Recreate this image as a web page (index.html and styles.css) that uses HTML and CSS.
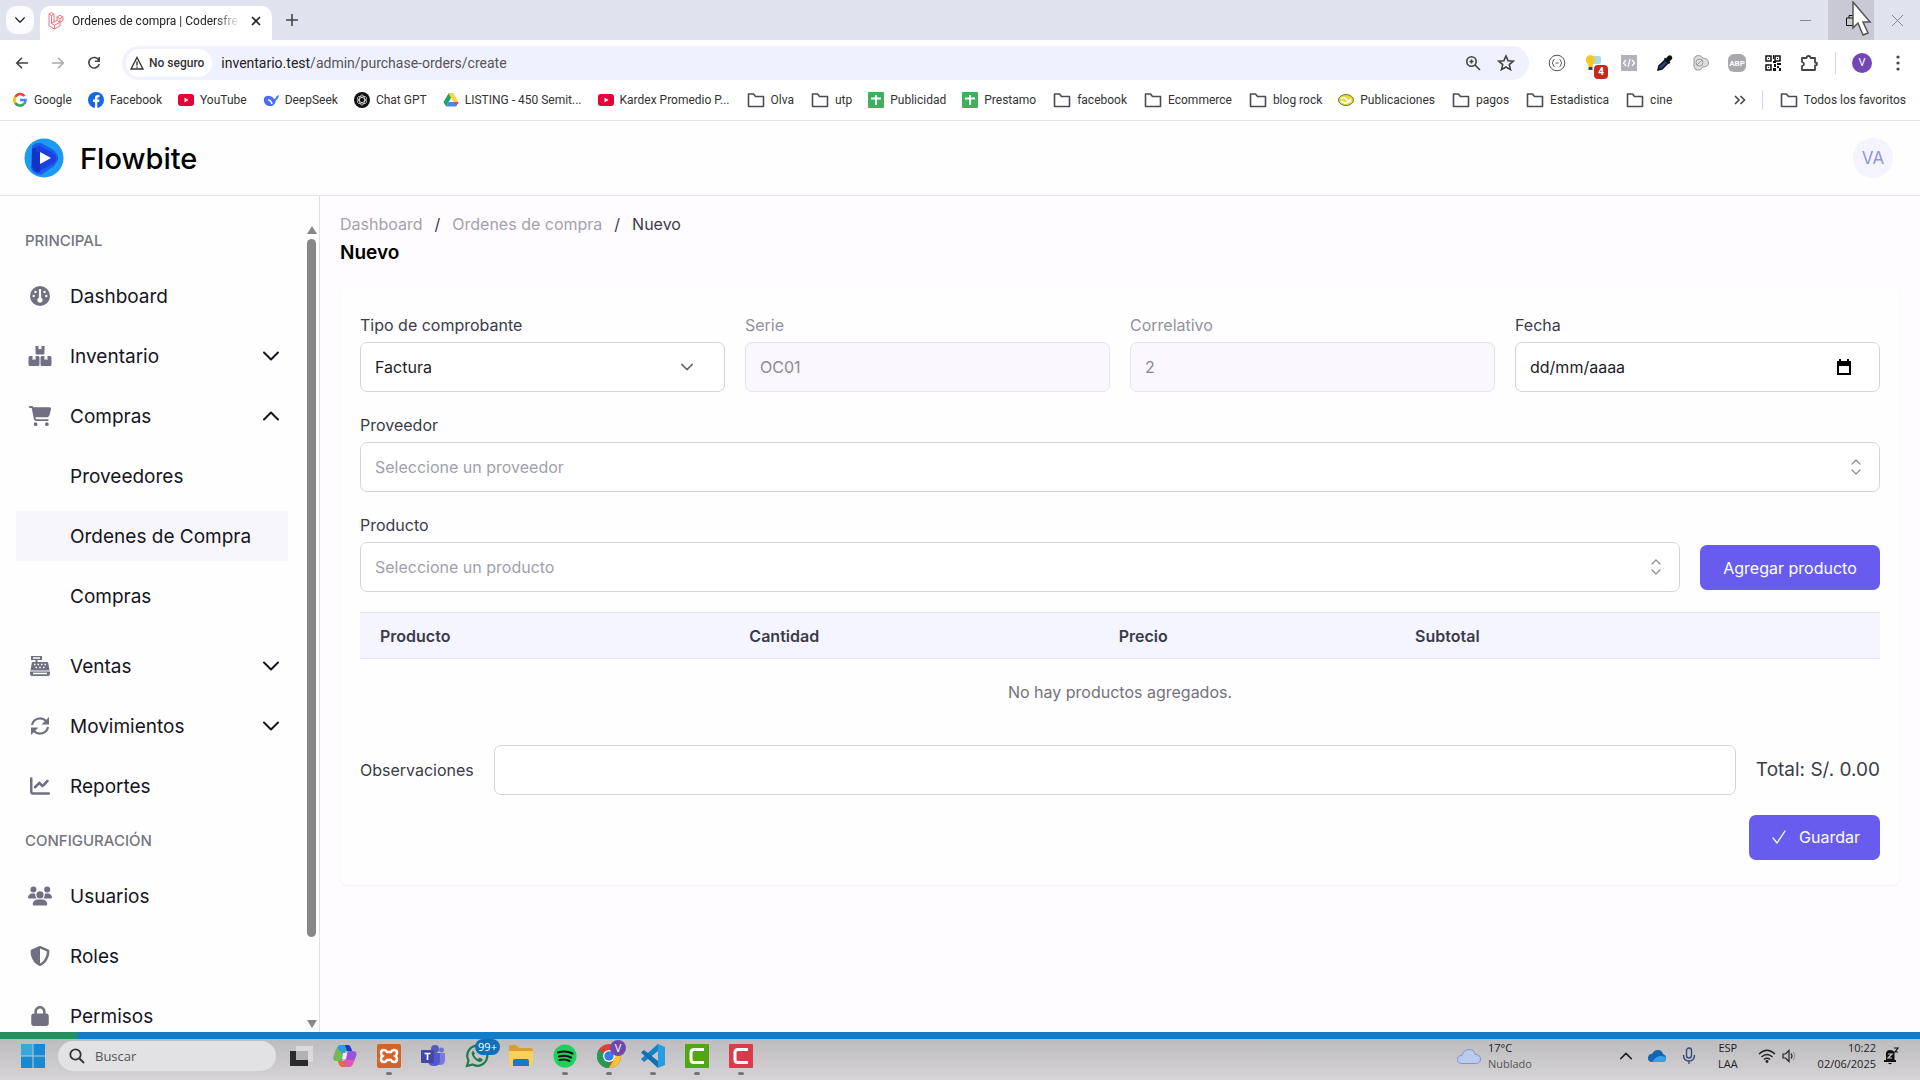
FILE: index.html
```html
<!DOCTYPE html>
<html lang="es">
<head>
    <meta charset="UTF-8">
    <meta name="viewport" content="width=device-width, initial-scale=1.0">
    <title>Ordenes de compra | Codersfree</title>
    <link rel="stylesheet" href="styles.css">
</head>
<body>
    <!-- iconos compartidos -->
    <svg class="hidden">
        <symbol id="folder" viewBox="0 0 20 20"><path d="M2.500 4h5l2 2.500h8V16.500h-15z" fill="none" stroke="#4b4b55" stroke-width="1.600" stroke-linejoin="round"/></symbol>
        <symbol id="youtube" viewBox="0 0 16 16"><rect y="2" width="16" height="12" rx="3" fill="#e60038"/><path d="M6.500 5.500v5l4-2.500z" fill="#fff"/></symbol>
        <symbol id="sheet" viewBox="0 0 16 16"><rect width="16" height="16" rx="1" fill="#3fb15c"/><path d="M8 3v10M3 6.500h10" stroke="#fff" stroke-width="2"/></symbol>
        <symbol id="down" viewBox="0 0 16 16"><path d="M1 4.500l7 7 7-7" fill="none" stroke="currentColor" stroke-width="2" stroke-linecap="round" stroke-linejoin="round"/></symbol>
        <symbol id="up" viewBox="0 0 16 16"><path d="M1 11.500l7-7 7 7" fill="none" stroke="currentColor" stroke-width="2" stroke-linecap="round" stroke-linejoin="round"/></symbol>
        <symbol id="updown" viewBox="0 0 20 20"><path d="M6 7l4-4 4 4M6 13l4 4 4-4" fill="none" stroke="currentColor" stroke-width="1.300" stroke-linecap="round" stroke-linejoin="round"/></symbol>
    </svg>

    <!-- navegador -->
    <div class="browser">
        <div class="tabs">
            <button class="tab-search" aria-label="Buscar pestañas"><svg width="10" height="10"><use href="#down"/></svg></button>
            <div class="tab">
                <svg width="16" height="18" viewBox="0 0 16 18" fill="none" stroke="#f2727c" stroke-width="1" stroke-linejoin="round"><path d="M1 2l2.500-1.500L6 2v8l3-1.700V5l3-1.700L15 5v3.500l-3 1.700v3.600L6.500 17 1 13.800zM1 2l2.500 1.500L6 2M3.500 3.500v8l3 1.800 5.500-3.100M9 5l3 1.700L15 5M12 6.700v3.500M9 8.300l3 1.900M6.500 13.300V17M3.500 11.500L6 10"/></svg>
                <span class="tab-title">Ordenes de compra | Codersfre</span>
                <button class="tab-close" aria-label="Cerrar"><svg width="10" height="10" viewBox="0 0 10 10"><path d="M1 1l8 8M9 1L1 9" stroke="#222" stroke-width="1.700"/></svg></button>
            </div>
            <button class="tab-new" aria-label="Nueva pestaña"><svg width="12" height="12" viewBox="0 0 12 12"><path d="M6 0v12M0 6h12" stroke="#444" stroke-width="1.600"/></svg></button>
            <div class="window-buttons">
                <button aria-label="Minimizar"><svg width="11" height="11" viewBox="0 0 11 11"><path d="M0 5.500h11" stroke="#888"/></svg></button>
                <button class="hover" aria-label="Restaurar"><svg width="11" height="11" viewBox="0 0 11 11" fill="none" stroke="#111"><path d="M.5 3h7v7.500h-7zM3 3V.5h7.500V8H8"/></svg></button>
                <button aria-label="Cerrar ventana"><svg width="11" height="11" viewBox="0 0 11 11"><path d="M0 0l11 11M11 0L0 11" stroke="#888"/></svg></button>
            </div>
            <svg class="cursor" width="20" height="36" viewBox="0 0 20 36"><path d="M1 1v26l5-5 5 12 5-2-5-11h7z" fill="#fff" stroke="#555" stroke-width="1.500"/></svg>
        </div>
        <div class="toolbar">
            <button aria-label="Atrás"><svg width="14" height="14" viewBox="0 0 16 16" fill="none" stroke="#444" stroke-width="1.800"><path d="M15 8H2M8 2L2 8l6 6"/></svg></button>
            <button aria-label="Adelante"><svg width="14" height="14" viewBox="0 0 16 16" fill="none" stroke="#aaa" stroke-width="1.800"><path d="M1 8h13M8 2l6 6-6 6"/></svg></button>
            <button aria-label="Recargar"><svg width="14" height="14" viewBox="0 0 16 16" fill="none" stroke="#444" stroke-width="1.800"><path d="M13.500 5A6 6 0 1 0 14 9M14 1v5H9"/></svg></button>
            <div class="omnibox">
                <span class="chip">
                    <svg width="14" height="14" viewBox="0 0 14 14" fill="none" stroke="#333" stroke-width="1.400"><path d="M7 1.500L13 13H1zM7 5.500v4M7 10.500v1.200"/></svg>
                    No seguro
                </span>
                <span class="url">inventario.test<span>/admin/purchase-orders/create</span></span>
                <svg width="16" height="16" viewBox="0 0 16 16" fill="none" stroke="#444" stroke-width="1.600"><circle cx="6.500" cy="6.500" r="4.700"/><path d="M10 10l5 5M6.500 4.500v4M4.500 6.500h4"/></svg>
                <svg width="18" height="18" viewBox="0 0 18 18" fill="none" stroke="#444" stroke-width="1.600"><path d="M9 2l2.100 4.700 5.100.5-3.900 3.400 1.200 5L9 13l-4.500 2.600 1.200-5L1.800 7.200l5.100-.5z"/></svg>
            </div>
            <div class="extensions">
                <span><svg width="18" height="18" viewBox="0 0 18 18" fill="none" stroke="#555"><circle cx="9" cy="9" r="7.800"/><path d="M6.500 5.500q-1.300 0-1.300 1.500T4 9q1.200.5 1.200 2t1.300 1.500M11.500 5.500q1.300 0 1.300 1.500T14 9q-1.200.5-1.200 2t-1.300 1.500M7.500 9h3"/></svg></span>
                <span class="bulb">
                    <svg width="20" height="20" viewBox="0 0 20 20"><rect x="9" y="3" width="9" height="8" rx="2" fill="#a9dcea"/><path d="M7 2a5 5 0 0 1 3 9l-.5 3h-4L5 11a5 5 0 0 1 2-9z" fill="#f6c928"/><path d="M5.500 14h4v3h-4z" fill="#444"/></svg>
                    <b>4</b>
                </span>
                <span><svg width="16" height="16" viewBox="0 0 16 16"><path fill="#b3b1ba" d="M0 0h16v16H0z"/><path d="M5 5L2.500 8 5 11M11 5l2.500 3L11 11M9 4l-2 8" fill="none" stroke="#fff" stroke-width="1.200"/></svg></span>
                <span><svg width="18" height="18" viewBox="0 0 18 18"><path d="M2 16l1-4 6-6 3 3-6 6z" fill="#2c3d8c" stroke="#111" stroke-width="1.500"/><path d="M8 5l5 5 1.500-1.500-1-1L16 5q1-1.500-.5-3T12 2l-2 2.500-1-1z" fill="#111"/></svg></span>
                <span><svg width="18" height="18" viewBox="0 0 18 18" fill="#ddd" stroke="#999"><path d="M4 2q4-2 7 2 6 1 5.500 5T11 13q-3 4-7 3-3-3-2-7-1-5 2-7z"/><circle cx="7.500" cy="8.500" r="3.500"/><path d="M5 11l5-5" fill="none"/></svg></span>
                <span class="abp">ABP</span>
                <span><svg width="16" height="16" viewBox="0 0 16 16"><path d="M1 1h5v5H1zM10 1h5v5h-5zM1 10h5v5H1z" fill="none" stroke="#111" stroke-width="1.500"/><path d="M3 3h1v1H3zM12 3h1v1h-1zM3 12h1v1H3zM8 0h1v4H8zM8 6h3v2H8zM12 8h4v2h-4zM9 9h2v3H9zM12 11h2v2h-2zM14 13h2v3h-2zM8 13h3v3H8z" fill="#111"/></svg></span>
                <span><svg width="18" height="18" viewBox="0 0 18 18" fill="none" stroke="#444" stroke-width="1.800"><path d="M2 4h4.500q0-2 2-2t2 2H15v4.500q2 0 2 1.500t-2 1.500V16H2v-4q2-.5 2-2t-2-2z" stroke-linejoin="round"/></svg></span>
            </div>
            <span class="profile">V</span>
            <button aria-label="Menú"><svg width="4" height="16" viewBox="0 0 4 16" fill="#444"><circle cx="2" cy="2" r="1.600"/><circle cx="2" cy="8" r="1.600"/><circle cx="2" cy="14" r="1.600"/></svg></button>
        </div>
        <div class="bookmarks">
            <a href="#"><svg viewBox="0 0 16 16" fill="none" stroke-width="2.600"><path d="M12.500 4A5.500 5.500 0 0 0 3.300 5" stroke="#ea4335"/><path d="M3.300 5a5.500 5.500 0 0 0 0 6" stroke="#fbbc05"/><path d="M3.300 11a5.500 5.500 0 0 0 8.500 1" stroke="#34a853"/><path d="M11.800 12q1.700-1.500 1.700-4H8" stroke="#4285f4"/></svg>Google</a>
            <a href="#"><svg viewBox="0 0 16 16"><circle cx="8" cy="8" r="8" fill="#1866e8"/><path d="M7 16V10H5V7.500h2V6q0-3 3-3h1.500v2.300h-1Q9.300 5.300 9.300 6.500v1h2.200L11 10H9.300v6z" fill="#fff"/></svg>Facebook</a>
            <a href="#"><svg><use href="#youtube"/></svg>YouTube</a>
            <a href="#"><svg viewBox="0 0 16 16"><path d="M1 6q2-3 6-2 3 .5 4 3 2 0 2.500-3 1 0 2.500-1-.5 4-3 5-.5 4-4 6H5Q0 12 1 6z" fill="#4d6bfe"/><path d="M5 8q3 0 4 4" stroke="#fff" stroke-width="1.500" fill="none"/></svg>DeepSeek</a>
            <a href="#"><svg viewBox="0 0 16 16"><circle cx="8" cy="8" r="8" fill="#111"/><g fill="none" stroke="#ddd" stroke-width=".8"><ellipse cx="8" cy="8" rx="2.500" ry="5"/><ellipse cx="8" cy="8" rx="2.500" ry="5" transform="rotate(60 8 8)"/><ellipse cx="8" cy="8" rx="2.500" ry="5" transform="rotate(120 8 8)"/></g></svg>Chat GPT</a>
            <a href="#"><svg viewBox="0 0 16 16"><path d="M5.500 1.500h5L8 6 3 14.500.5 10z" fill="#1fa463"/><path d="M10.500 1.500L15.500 10h-5L5.500 1.500z" fill="#ffd04b"/><path d="M5.500 10h10L13 14.500H3z" fill="#4688f1"/><path d="M12 10h3.500L13 14.500z" fill="#ea4335"/></svg>LISTING - 450 Semit...</a>
            <a href="#"><svg><use href="#youtube"/></svg>Kardex Promedio P...</a>
            <a href="#" class="folder"><svg><use href="#folder"/></svg>Olva</a>
            <a href="#" class="folder"><svg><use href="#folder"/></svg>utp</a>
            <a href="#"><svg><use href="#sheet"/></svg>Publicidad</a>
            <a href="#"><svg><use href="#sheet"/></svg>Prestamo</a>
            <a href="#" class="folder"><svg><use href="#folder"/></svg>facebook</a>
            <a href="#" class="folder"><svg><use href="#folder"/></svg>Ecommerce</a>
            <a href="#" class="folder"><svg><use href="#folder"/></svg>blog rock</a>
            <a href="#"><svg viewBox="0 0 16 16"><ellipse cx="8" cy="8" rx="7.500" ry="5.500" fill="#e2dc3c" stroke="#77752a"/><path d="M3 7q3-3 5 0t5 0M3 9l4 2.500L13 9" fill="none" stroke="#fff" stroke-width="1.500"/></svg>Publicaciones</a>
            <a href="#" class="folder"><svg><use href="#folder"/></svg>pagos</a>
            <a href="#" class="folder"><svg><use href="#folder"/></svg>Estadistica</a>
            <a href="#" class="folder"><svg><use href="#folder"/></svg>cine</a>
            <button class="more" aria-label="Más favoritos"><svg width="12" height="10" viewBox="0 0 12 10" fill="none" stroke="#444" stroke-width="1.600"><path d="M1 1l4 4-4 4M6.500 1l4 4-4 4"/></svg></button>
            <a href="#" class="folder all"><svg><use href="#folder"/></svg>Todos los favoritos</a>
        </div>
    </div>

    <header class="header">
        <svg width="40" height="40" viewBox="0 0 40 40"><circle cx="20" cy="20" r="19.500" fill="#1d9bf0"/><path d="M8 8q4-4 9-3l11 6q7 5 6 11l-4 6-13 9q-8-1-10-7z" fill="#1b5cf0"/><path d="M8 11q5-3 9 0v20q-1 5-5 3-4-2-4-7z" fill="#1234c8"/><path d="M12 9q3-2 6 0l12 7q5 4 0 9l-11 6q-4 1-3-4l8-7-12-7z" fill="#1c3fe0"/><path d="M16 14l11 6-11 6z" fill="#fff"/></svg>
        <span class="brand">Flowbite</span>
        <button class="avatar">VA</button>
    </header>

    <div class="layout">
        <aside class="sidebar">
            <nav class="menu">
                <h3>PRINCIPAL</h3>
                <a href="#"><svg viewBox="0 0 20 20"><circle cx="10" cy="10" r="10"/><g fill="#fff"><rect x="8.900" y="3" width="2.200" height="10" rx="1"/><circle cx="10" cy="14" r="2.600"/><circle cx="5.500" cy="6" r="1.200"/><circle cx="14.500" cy="6" r="1.200"/><circle cx="3.700" cy="10" r="1.200"/><circle cx="16.300" cy="10" r="1.200"/></g></svg>Dashboard</a>
                <a href="#"><svg viewBox="0 0 23 20"><path d="M7 0h3v3.500l1.500-.8 1.500.8V0h3v7q0 1.500-1.500 1.500h-6Q7 8.500 7 7zM0 11.500Q0 10 1.500 10H4v4l1.500-.8L7 14v-4h2.500q1.500 0 1.500 1.500v7Q11 20 9.500 20h-8Q0 20 0 18.500zM12 11.500q0-1.500 1.500-1.500H16v4l1.500-.8L19 14v-4h2.500q1.500 0 1.500 1.500v7q0 1.500-1.500 1.500h-8Q12 20 12 18.500z"/></svg>Inventario<svg class="arrow"><use href="#down"/></svg></a>
                <a href="#"><svg viewBox="0 0 576 512"><path d="M0 24C0 10.700 10.700 0 24 0H69.500c22 0 41.500 12.800 50.600 32h411c26.300 0 45.500 25 38.600 50.400l-41 152.300c-8.500 31.400-37 53.300-69.500 53.300H170.700l5.400 28.500c2.200 11.300 12.100 19.500 23.600 19.500H488c13.300 0 24 10.700 24 24s-10.700 24-24 24H199.700c-34.600 0-64.300-24.600-70.700-58.500L77.400 54.500c-.7-3.800-4-6.500-7.900-6.500H24C10.700 48 0 37.300 0 24zM128 464a48 48 0 1 1 96 0 48 48 0 1 1 -96 0zm336-48a48 48 0 1 1 0 96 48 48 0 1 1 0-96z"/></svg>Compras<svg class="arrow"><use href="#up"/></svg></a>
                <div class="submenu">
                    <a href="#">Proveedores</a>
                    <a href="#" class="active">Ordenes de Compra</a>
                    <a href="#">Compras</a>
                </div>
                <a href="#"><svg viewBox="0 0 20 20"><path d="M1 0h11v4H7.500v2H17q1 0 1.200 1l1.300 7.500H.5L1.800 7Q2 6 3 6h2.500V4H1zM0 15.500h20V18q0 2-2 2H2q-2 0-2-2z"/><path d="M3 2h7M4 8.500h1.500M7.500 8.500H9M11 8.500h1.500M14.500 8.500H16M5.500 11.500H7M9.200 11.500h1.600M13 11.500h1.500M3 17.500h14" stroke="#fff" stroke-width="1.300"/></svg>Ventas<svg class="arrow"><use href="#down"/></svg></a>
                <a href="#"><svg viewBox="0 0 20 20"><path d="M2 9a8.200 8.200 0 0 1 14-4l2 2M18 11a8.200 8.200 0 0 1-14 4l-2-2" fill="none" stroke="#6f7082" stroke-width="2.200"/><path d="M19 1v7.500h-7.500zM1 19v-7.500h7.500z"/></svg>Movimientos<svg class="arrow"><use href="#down"/></svg></a>
                <a href="#"><svg viewBox="0 0 512 512"><path d="M64 64c0-17.700-14.300-32-32-32S0 46.300 0 64V400c0 44.200 35.800 80 80 80H480c17.700 0 32-14.300 32-32s-14.300-32-32-32H80c-8.800 0-16-7.200-16-16V64zm406.600 86.600c12.500-12.500 12.500-32.800 0-45.300s-32.800-12.500-45.300 0L320 210.700l-57.400-57.400c-12.500-12.500-32.800-12.500-45.300 0l-112 112c-12.500 12.500-12.500 32.800 0 45.300s32.800 12.500 45.300 0L240 221.300l57.400 57.400c12.500 12.500 32.800 12.500 45.300 0l128-128z"/></svg>Reportes</a>
                <h3>CONFIGURACIÓN</h3>
                <a href="#"><svg viewBox="0 0 640 512"><path d="M144 0a80 80 0 1 1 0 160A80 80 0 1 1 144 0zM512 0a80 80 0 1 1 0 160A80 80 0 1 1 512 0zM0 298.700C0 239.800 47.800 192 106.700 192h42.700c15.900 0 31 3.500 44.600 9.700c-1.300 7.200-1.900 14.700-1.900 22.300c0 38.200 16.800 72.500 43.300 96H21.300C9.600 320 0 310.400 0 298.700zM405.300 320c26.600-23.500 43.300-57.800 43.300-96c0-7.600-.7-15-1.900-22.300c13.600-6.300 28.700-9.700 44.600-9.700h42.700C592.200 192 640 239.800 640 298.700c0 11.800-9.600 21.300-21.300 21.300H405.300zM224 224a96 96 0 1 1 192 0 96 96 0 1 1 -192 0zM128 485.300C128 411.700 187.700 352 261.300 352H378.700C452.300 352 512 411.700 512 485.300c0 14.700-11.900 26.700-26.700 26.700H154.700c-14.700 0-26.700-11.900-26.700-26.700z"/></svg>Usuarios</a>
                <a href="#"><svg viewBox="0 0 512 512"><path d="M256 0c4.600 0 9.200 1 13.400 2.900L457.700 82.800c22 9.300 38.400 31 38.300 57.200c-.5 99.200-41.300 280.700-213.600 363.200c-16.700 8-36.100 8-52.800 0C57.300 420.700 16.500 239.200 16 140c-.1-26.200 16.300-47.900 38.300-57.200L242.700 2.900C246.800 1 251.400 0 256 0zm0 66.800V444.800C394 378 431.100 230.100 432 141.400L256 66.800z"/></svg>Roles</a>
                <a href="#"><svg viewBox="0 0 448 512"><path d="M144 144v48H304V144c0-44.200-35.800-80-80-80s-80 35.800-80 80zM80 192V144C80 64.500 144.500 0 224 0s144 64.500 144 144v48h16c35.300 0 64 28.700 64 64V448c0 35.300-28.700 64-64 64H64c-35.300 0-64-28.700-64-64V256c0-35.300 28.700-64 64-64H80z"/></svg>Permisos</a>
            </nav>
            <div class="scrollbar">
                <svg width="10" height="8" viewBox="0 0 10 8"><path d="M5 0l5 8H0z"/></svg>
                <span class="thumb"></span>
                <svg width="10" height="8" viewBox="0 0 10 8"><path d="M5 8l5-8H0z"/></svg>
            </div>
        </aside>

        <main class="content">
            <nav class="breadcrumb"><a href="#">Dashboard</a><span>/</span><a href="#">Ordenes de compra</a><span>/</span><span>Nuevo</span></nav>
            <h1>Nuevo</h1>
            <form class="card">
                <div class="grid">
                    <div class="field">
                        <label for="tipo">Tipo de comprobante</label>
                        <div class="control">
                            <select id="tipo"><option>Factura</option></select>
                            <svg class="caret" width="12" height="12"><use href="#down"/></svg>
                        </div>
                    </div>
                    <div class="field disabled">
                        <label for="serie">Serie</label>
                        <input type="text" id="serie" value="OC01" disabled>
                    </div>
                    <div class="field disabled">
                        <label for="correlativo">Correlativo</label>
                        <input type="text" id="correlativo" value="2" disabled>
                    </div>
                    <div class="field">
                        <label for="fecha">Fecha</label>
                        <div class="control">
                            <input type="text" id="fecha" class="date" placeholder="dd/mm/aaaa">
                            <svg class="calendar" width="16" height="16" viewBox="0 0 16 16"><path d="M1 2h2V0h2v2h6V0h2v2h2v14H1zm2 5v7h10V7z" fill="#000" fill-rule="evenodd"/></svg>
                        </div>
                    </div>
                </div>
                <div class="field">
                    <label for="proveedor">Proveedor</label>
                    <div class="control">
                        <select id="proveedor" class="empty"><option>Seleccione un proveedor</option></select>
                        <svg class="updown" width="20" height="20"><use href="#updown"/></svg>
                    </div>
                </div>
                <div class="row">
                    <div class="field grow">
                        <label for="producto">Producto</label>
                        <div class="control">
                            <select id="producto" class="empty"><option>Seleccione un producto</option></select>
                            <svg class="updown" width="20" height="20"><use href="#updown"/></svg>
                        </div>
                    </div>
                    <button type="button" class="btn add">Agregar producto</button>
                </div>
                <table class="table">
                    <thead>
                        <tr><th>Producto</th><th>Cantidad</th><th>Precio</th><th>Subtotal</th><th></th></tr>
                    </thead>
                    <tbody>
                        <tr><td colspan="5">No hay productos agregados.</td></tr>
                    </tbody>
                </table>
                <div class="summary">
                    <label for="obs">Observaciones</label>
                    <input type="text" id="obs" class="grow">
                    <span class="total">Total: S/. 0.00</span>
                </div>
                <button type="button" class="btn save"><svg width="20" height="20" viewBox="0 0 20 20"><path d="M4 11l4 5 8-12" fill="none" stroke="#fff" stroke-width="1.300" stroke-linecap="round"/></svg>Guardar</button>
            </form>
        </main>
    </div>

    <div class="progress"><span></span></div>

    <!-- barra de tareas -->
    <footer class="taskbar">
        <svg class="start" width="24" height="24" viewBox="0 0 24 24" fill="#168bd4"><path fill="#35a8dc" d="M0 0h11.500v11.500H0z"/><path d="M12.500 0H24v11.500H12.500zM0 12.500h11.500V24H0zM12.500 12.500H24V24H12.500z"/></svg>
        <label class="search">
            <svg width="16" height="16" viewBox="0 0 16 16" fill="none" stroke="#333" stroke-width="1.800"><circle cx="6.500" cy="6.500" r="5.200"/><path d="M10.500 10.500L15 15"/></svg>
            <input type="text" placeholder="Buscar" aria-label="Buscar">
        </label>
        <div class="apps">
            <span><svg viewBox="0 0 24 24"><path fill="#dcdadc" d="M7 2h17v16H7z"/><path fill="#2a2a2c" d="M1 7h18v15H1z"/><path fill="#b3b1b4" d="M7 7h12v9H7z"/></svg></span>
            <span><svg viewBox="0 0 24 24"><path d="M7 1h8q2 0 3 3l1 3h-5q-2 0-3 3l-2 7H4q-5 0-3-6l3-7q1-3 3-3z" fill="#2e9fd8"/><path d="M4 4l-3 7q-1 4 2 6h5l2-7z" fill="#7bb94a"/><path d="M12 1h3q2 0 3 3l1 3h-5z" fill="#2438b5"/><path d="M17 23H9q-2 0-3-3l-1-3h5q2 0 3-3l2-7h5q5 0 3 6l-3 7q-1 3-3 3z" fill="#d95bb0"/><path d="M12 23H9q-2 0-3-3l-1-3h5z" fill="#ee6b35"/><path d="M15 7h5q4 1 3 5l-2 4h-8z" fill="#9157dd"/><path d="M10 9h4l-1 6H9z" fill="#f0e8f2"/></svg></span>
            <span class="open"><svg viewBox="0 0 24 24"><rect width="24" height="24" rx="2" fill="#d4632a"/><path d="M7 6q-3 0-3 3 0 2 1.500 3Q4 13 4 15q0 3 3 3 2 0 3-2h4q1 2 3 2 3 0 3-3 0-2-1.500-3Q20 11 20 9q0-3-3-3-2 0-3 2h-4Q9 6 7 6z" fill="none" stroke="#fff" stroke-width="2.600"/></svg></span>
            <span><svg viewBox="0 0 24 24"><circle cx="14" cy="5" r="4" fill="#5558c8"/><circle cx="20.500" cy="6" r="2.500" fill="#6f72d8"/><path fill="#777be0" d="M17 9h7v7q0 5-5 5h-2z"/><path fill="#5558c8" d="M7 9h12v8q0 5-6 5t-6-5z"/><rect y="6" width="13" height="13" rx="1" fill="#4347a8"/><path d="M3.500 9.500h6M6.500 9.500V16" stroke="#fff" stroke-width="1.700"/></svg></span>
            <span class="whatsapp"><svg viewBox="0 0 24 24"><path d="M2 22l1.500-5.500A10 10 0 1 1 7.500 20.500z" fill="none" stroke="#1f7a4c" stroke-width="2.200"/><path d="M8 6.500q-2 2-1 4.500 2 5 7 7 2.500.5 4-2.500l-3.500-2-1.500 1.500q-2.500-1-4-4l1-1.500z" fill="#1f7a4c"/></svg><b>99+</b></span>
            <span><svg viewBox="0 0 24 24"><path d="M0 3q0-2 2-2h5l3 3h12q2 0 2 2v5H0z" fill="#d99e2b"/><path d="M0 7h24v13q0 2-2 2H2q-2 0-2-2z" fill="#fad05a"/><path d="M4 17q0-2 2-2h12q2 0 2 2v5H4z" fill="#1679c8"/></svg></span>
            <span class="open"><svg viewBox="0 0 24 24"><circle cx="12" cy="12" r="11.500" fill="#1ed05b"/><path d="M5 8.500q8-2.500 14.500 1M6 12.500q7-2 12 1M6.500 16q6-1.500 10 1" fill="none" stroke="#111" stroke-width="2.100" stroke-linecap="round"/></svg></span>
            <span class="open chrome"><svg viewBox="0 0 24 24"><circle cx="12" cy="12" r="12" fill="#dd4136"/><path d="M1.600 6L12 12l1 12A12 12 0 0 1 1.600 6z" fill="#259b55"/><path d="M22.800 7A12 12 0 0 1 12 24l5-9-1-8z" fill="#f6c631"/><circle cx="12" cy="12" r="6" fill="#fff"/><circle cx="12" cy="12" r="4.700" fill="#377be6"/></svg><b>V</b></span>
            <span class="open"><svg viewBox="0 0 24 24"><path d="M17 0l7 3v18l-7 3z" fill="#279ddf"/><path d="M17 0v7L3 18l-3-3z" fill="#1681c5"/><path d="M0 8.500L3 6l14 11v7z" fill="#1170b2"/></svg></span>
            <span class="open"><svg viewBox="0 0 24 24"><rect width="24" height="24" rx="1" fill="#50a615"/><path d="M19 5.500H9q-3 0-3 3v7q0 3 3 3h10" fill="none" stroke="#fff" stroke-width="3"/></svg></span>
            <span class="open"><svg viewBox="0 0 24 24"><rect width="24" height="24" rx="1" fill="#dc3b49"/><path d="M19 5.500H9q-3 0-3 3v7q0 3 3 3h10" fill="none" stroke="#fff" stroke-width="3"/></svg></span>
        </div>
        <div class="weather">
            <svg width="24" height="16" viewBox="0 0 24 16"><path d="M5 15.500q-4.500 0-4.500-4T5 7.500q1.500-6 7-6t6 5q5.500 0 5.500 4.500t-5 4.500z" fill="#b9cbee" stroke="#8296c8"/></svg>
            <p>17°C<br><span>Nublado</span></p>
        </div>
        <div class="tray">
            <svg width="12" height="12"><use href="#up"/></svg>
            <svg width="18" height="12" viewBox="0 0 18 12"><path d="M4 12q-4 0-4-4t4-4q2-4 6-4t5 4q3 1 3 4t-3 4z" fill="#1267b4"/><path d="M4 12q4-6 8-6 6 0 6 3t-3 3z" fill="#30a4e0"/></svg>
            <svg width="14" height="18" viewBox="0 0 14 18" fill="none" stroke="#3b4b80" stroke-width="1.400"><rect x="4.500" y="1" width="5" height="10" rx="2.500"/><path d="M1.500 8q0 6 5.500 6t5.500-6M7 14v3"/></svg>
        </div>
        <p class="lang">ESP<br>LAA</p>
        <svg width="18" height="14" viewBox="0 0 18 14" fill="none" stroke="#222" stroke-width="1.300"><path d="M1 5q8-7.500 16 0M3.500 8q5.500-5 11 0M6 10.500q3-2.500 6 0"/><circle cx="9" cy="12.500" r=".8" fill="#222"/></svg>
        <svg width="16" height="14" viewBox="0 0 16 14" fill="none" stroke="#222" stroke-width="1.200"><path d="M1 5h2.500L7 1.500v11L3.500 9H1zM9 4.500q2 2.500 0 5"/><path d="M11 3q3.500 4 0 8" stroke="#999"/></svg>
        <p class="clock">10:22<br>02/06/2025</p>
        <svg width="16" height="18" viewBox="0 0 16 18"><path d="M2 15h11v-2H11.500V5Q10 3 7 3 3 3 3 7v6H1v2z" fill="#111"/><path d="M5 16h4q-2 2.500-4 0z" fill="#111"/><path d="M5 7h4l-4 4h4" stroke="#ccc" fill="none" stroke-width="1.200"/><path d="M11 1h4l-3 4h3" stroke="#111" fill="none" stroke-width="1.200"/></svg>
    </footer>
</body>
</html>
```

FILE: styles.css
```css
* { box-sizing: border-box; }
body { margin: 0; height: 100vh; display: flex; flex-direction: column; overflow: hidden; font-family: Inter, sans-serif; background: #fefcff; color: #3b3b4b; }
button { background: none; border: none; padding: 0; font-family: inherit; cursor: pointer; display: flex; align-items: center; justify-content: center; }
a { text-decoration: none; color: inherit; }
p { margin: 0; }
svg { flex-shrink: 0; }
.hidden { display: none; }
.grow { flex: 1; }

/* navegador */
.browser { font-family: Roboto, sans-serif; background: white; color: #333; }
.tabs { position: relative; display: flex; height: 40px; background: #e0e2ee; padding-left: 6px; }
.tab-search { width: 28px; height: 28px; margin-top: 6px; border-radius: 10px; background: #fcfbff; color: #222; }
.tab { display: flex; align-items: center; gap: 8px; width: 232px; margin: 6px 0 0 6px; padding: 0 8px 4px; border-radius: 10px 10px 0 0; background: white; }
.tab-title { flex: 1; font-size: 12px; white-space: nowrap; color: #222; mask-image: linear-gradient(90deg, black 85%, transparent); }
.tab-close { width: 16px; height: 16px; }
.tab-new { width: 28px; height: 28px; margin: 6px 0 0 6px; }
.window-buttons { display: flex; margin-left: auto; }
.window-buttons button { width: 46px; height: 40px; }
.window-buttons .hover { background: #c8c9d5; }
.cursor { position: absolute; top: 1px; right: 48px; }
.toolbar { display: flex; align-items: center; height: 40px; padding: 6px 4px 0 4px; }
.toolbar button { width: 36px; height: 34px; }
.omnibox { flex: 1; display: flex; align-items: center; gap: 16px; height: 34px; margin-left: 10px; padding: 0 14px 0 4px; border-radius: 17px; background: #f0f1ff; }
.chip { display: flex; align-items: center; gap: 5px; height: 28px; padding: 0 8px 0 4px; border-radius: 14px; background: white; font-size: 12px; font-weight: 500; margin-right: -7px; }
.url { flex: 1; font-size: 14px; color: #222; }
.url span { color: #555; }
.extensions { display: flex; margin-left: 10px; padding-right: 8px; border-right: 1px solid #d5d5e5; }
.extensions span { display: flex; align-items: center; justify-content: center; width: 36px; height: 22px; }
.bulb { position: relative; }
.bulb b { position: absolute; right: 3px; bottom: -5px; width: 14px; height: 14px; border-radius: 4px; background: #c5281c; color: white; font-size: 10px; line-height: 14px; text-align: center; }
.extensions .abp { width: 18px; height: 18px; margin: 2px 9px; border-radius: 6px; background: #a9a9ad; color: white; font-size: 8px; font-weight: bold; }
.profile { width: 20px; height: 20px; margin: 0 8px 0 16px; border-radius: 50%; background: #7446b5; color: white; font-size: 11px; line-height: 20px; text-align: center; }
.bookmarks { display: flex; align-items: center; gap: 16px; height: 41px; padding: 0 14px 0 12px; border-bottom: 1px solid #e3e3ea; font-size: 12px; white-space: nowrap; }
.bookmarks a { display: flex; align-items: center; gap: 6px; }
.bookmarks a svg { width: 16px; height: 16px; }
.bookmarks .folder { gap: 5px; }
.bookmarks .folder svg { width: 20px; height: 20px; }
.bookmarks .more { margin-left: auto; }
.bookmarks .all { padding-left: 16px; border-left: 1px solid #d5d5e5; }

/* cabecera */
.header { display: flex; align-items: center; gap: 16px; height: 75px; padding: 0 27px 0 24px; border-bottom: 1px solid #e6e5ec; background: #fefefe; }
.brand { font-size: 29px; font-weight: 500; color: #000; }
.avatar { width: 40px; height: 40px; margin-left: auto; border-radius: 50%; background: #f3f4ff; color: #8f94dc; font-size: 17px; }

/* menu lateral */
.layout { flex: 1; display: flex; min-height: 0; }
.sidebar { width: 320px; display: flex; border-right: 1px solid #e0dfe8; background: #fefefe; }
.menu { flex: 1; display: flex; flex-direction: column; gap: 10px; padding: 25px 16px 0; overflow: hidden; }
.menu h3 { flex-shrink: 0; margin: 0; padding-left: 9px; font-size: 15px; font-weight: 500; line-height: 40px; color: #74757f; }
.menu a { flex-shrink: 0; display: flex; align-items: center; gap: 18px; height: 50px; padding: 0 9px 0 12px; font-size: 19px; color: #15151f; }
.menu a svg { width: 24px; height: 20px; fill: #6f7082; }
.menu a .arrow { width: 16px; height: 16px; margin-left: auto; }
.submenu { flex-shrink: 0; display: flex; flex-direction: column; gap: 10px; padding-bottom: 10px; }
.submenu a { padding-left: 54px; }
.menu .active { background: #f6f6fb; }
.scrollbar { display: flex; flex-direction: column; align-items: center; gap: 5px; width: 15px; padding: 30px 0 4px; }
.scrollbar svg { fill: #88878b; }
.thumb { width: 9px; height: 87%; margin-bottom: auto; border-radius: 5px; background: #88878b; }

/* contenido */
.content { flex: 1; padding: 16px 20px; }
.breadcrumb { display: flex; gap: 12px; font-size: 16px; line-height: 25px; }
.breadcrumb a { color: #a3a2ac; }
h1 { margin: 0 0 18px; font-size: 19px; font-weight: 600; line-height: 32px; color: #000; }
.card { display: flex; flex-direction: column; gap: 20px; padding: 25px 20px; border-radius: 8px; background: #fefefe; box-shadow: 0 1px 2px rgba(80,60,120,0.06); }
.grid { display: grid; grid-template-columns: repeat(4, 1fr); gap: 20px; }
.row { display: flex; align-items: flex-end; gap: 20px; }
label { font-size: 16px; }
.field label { display: block; margin-bottom: 3px; line-height: 27px; }
.control { position: relative; }
.card input, .card select { display: block; width: 100%; height: 50px; padding: 0 14px; border: 1px solid #d4d3de; border-radius: 7px; background: white; font-family: inherit; font-size: 16px; color: #1c1c28; appearance: none; }
.card .empty { color: #a09fab; }
.disabled label { color: #93929c; }
.card .disabled input { background: #faf7ff; border-color: #e6e3ee; color: #8b8994; }
.date::placeholder { color: #1c1c28; }
.caret { position: absolute; right: 32px; top: 19px; color: #66666f; }
.calendar { position: absolute; right: 28px; top: 17px; }
.updown { position: absolute; right: 14px; top: 15px; color: #8f8e99; }
.btn { gap: 10px; height: 45px; padding: 0 20px; border-radius: 7px; background: #675cee; color: white; font-size: 16px; }
.add { width: 180px; margin-bottom: 2px; }
.save { align-self: flex-end; }
.table { width: 100%; border-collapse: collapse; table-layout: fixed; font-size: 16px; }
.table th { height: 46px; padding: 0 20px; text-align: left; font-weight: 600; background: #f4f5ff; border-top: 1px solid #e4e3f0; border-bottom: 1px solid #e4e3f0; }
.table th:nth-child(1), .table th:nth-child(2) { width: 24.3%; }
.table th:nth-child(3) { width: 19.5%; }
.table td { height: 66px; text-align: center; color: #73727c; }
.summary { display: flex; align-items: center; gap: 20px; }
.summary input { width: auto; }
.total { font-size: 19px; }

.progress { height: 7px; background: #107dca; }
.progress span { display: block; width: 4%; height: 100%; background: #249060; }

/* barra de tareas */
.taskbar { display: flex; align-items: center; height: 41px; padding: 0 21px 8px; background: linear-gradient(#bcbbbe, #d5d3d6); font-family: "Open Sans", sans-serif; font-size: 11px; line-height: 16px; color: #222; }
.search { display: flex; align-items: center; gap: 10px; width: 218px; height: 30px; margin: 0 13px; padding: 0 11px; border-radius: 15px; background: #e2e1e4; }
.search input { width: 100%; padding: 0; border: none; outline: none; background: none; font-family: inherit; font-size: 13px; }
.search input::placeholder { color: #555; }
.apps { display: flex; gap: 20px; }
.apps span { position: relative; width: 24px; height: 24px; }
.apps svg { width: 24px; height: 24px; }
.open::after { content: ""; position: absolute; left: 9px; bottom: -7px; width: 6px; height: 3px; border-radius: 2px; background: #777; }
.apps b { position: absolute; border-radius: 8px; color: white; font-weight: normal; text-align: center; }
.whatsapp b { left: 10px; top: -5px; width: 25px; height: 16px; background: #0e70b8; }
.chrome b { left: 13px; top: -4px; width: 16px; height: 16px; background: #6f48ad; }
.weather { display: flex; align-items: center; gap: 7px; margin-left: auto; }
.weather span { color: #555; }
.tray { display: flex; align-items: center; gap: 16px; margin: 0 22px 0 88px; }
.lang { text-align: center; margin-right: 20px; }
.clock { text-align: right; margin: 0 7px 0 20px; }
.lang + svg { margin-right: 6px; }
```
